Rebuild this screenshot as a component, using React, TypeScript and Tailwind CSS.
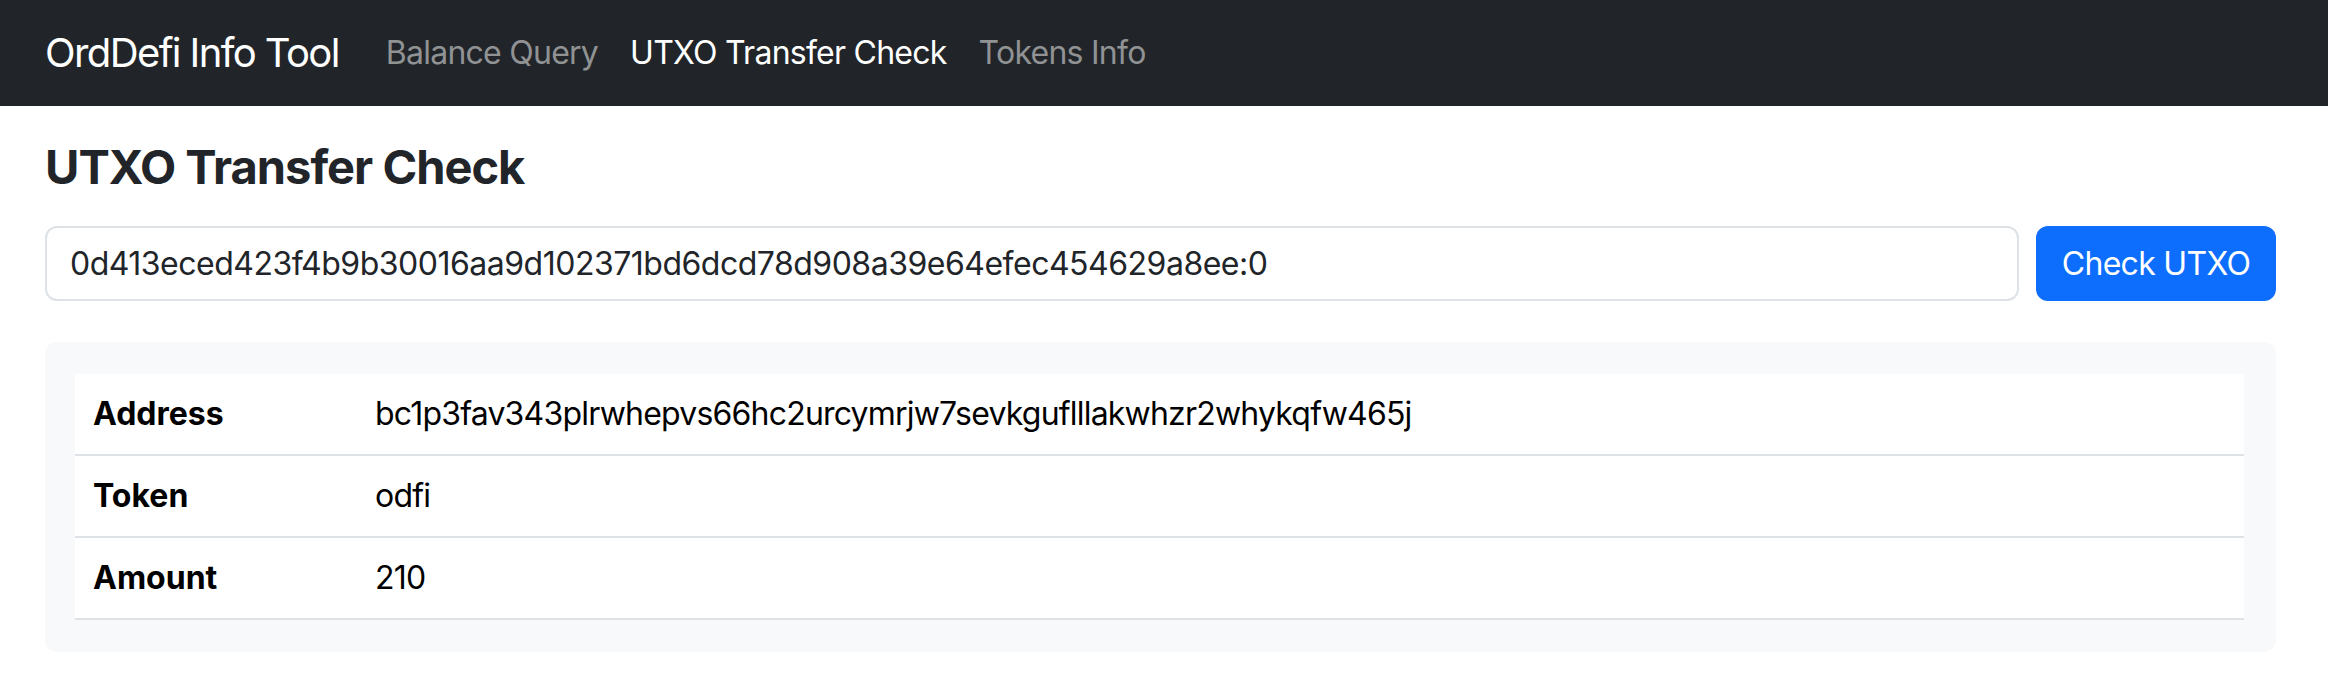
import React from "react";

const rows = [
  { label: "Address", value: "bc1p3fav343plrwhepvs66hc2urcymrjw7sevkguflllakwhzr2whykqfw465j" },
  { label: "Token", value: "odfi" },
  { label: "Amount", value: "210" },
];

export default function App() {
  return (
    <div className="min-h-[686px] bg-white" style={{ fontFamily: "Inter, 'Liberation Sans', sans-serif" }}>
      <nav className="h-[106px] bg-[#212529] flex items-center pl-[45px]">
        <span className="text-[40px] leading-none text-white mr-[47px] tracking-[-1.6px]">OrdDefi Info Tool</span>
        <div className="flex items-center gap-[32px] text-[32px] leading-none tracking-[-0.75px]">
          <span className="text-[#909294]">Balance Query</span>
          <span className="text-white">UTXO Transfer Check</span>
          <span className="text-[#909294]">Tokens Info</span>
        </div>
      </nav>
      <main className="pl-[45px] pr-[52px]">
        <h2 className="text-[47px] font-bold leading-[56px] text-[#212529] mt-[33px] tracking-[-1px]">UTXO Transfer Check</h2>
        <div className="flex gap-[17px] mt-[31px]">
          <div className="flex-1 h-[75px] border-2 border-[#dee2e6] rounded-[12px] flex items-center px-[23px] text-[32px] text-[#212529] tracking-[-0.5px]">
            0d413eced423f4b9b30016aa9d102371bd6dcd78d908a39e64efec454629a8ee:0
          </div>
          <button className="w-[240px] h-[75px] bg-[#0d6efd] text-white rounded-[12px] text-[32px] tracking-[-0.7px]">Check UTXO</button>
        </div>
        <div className="mt-[41px] bg-[#f8f9fa] rounded-[12px] pt-[32px] pb-[32px] pl-[30px] pr-[32px]">
          <div className="bg-white">
            {rows.map((r) => (
              <div key={r.label} className="h-[82px] flex items-center border-b-2 border-[#dee2e6] text-[32px] text-black">
                <div className="w-[300px] pl-[18px] font-bold">{r.label}</div>
                <div className="tracking-[-0.8px]">{r.value}</div>
              </div>
            ))}
          </div>
        </div>
      </main>
    </div>
  );
}
